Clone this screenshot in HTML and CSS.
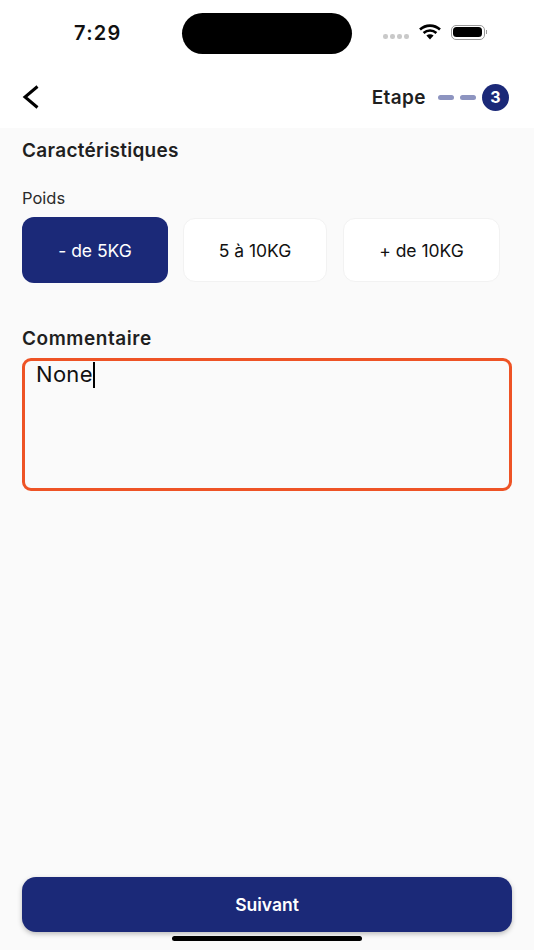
FILE: index.html
```html
<!DOCTYPE html>
<html>
<head>
  <meta charset="utf-8">
  <title>Caractéristiques</title>
  <link rel="stylesheet" href="styles.css">
</head>
<body>
  <div class="screen">
    <header class="top">
      <div class="status">
        <span class="time">7:29</span>
        <div class="island"></div>
        <div class="status-icons">
          <div class="signal"><i></i><i></i><i></i><i></i></div>
          <svg class="wifi" width="22" height="16" viewBox="0 0 22 16">
            <path d="M1 5.5C6.7 0.3 15.3 0.3 21 5.5" fill="none" stroke="#000" stroke-width="2.6"/>
            <path d="M4.6 9C8.3 5.7 13.7 5.7 17.4 9" fill="none" stroke="#000" stroke-width="2.6"/>
            <path d="M7.4 11.6L11 15.5L14.6 11.6C12.5 9.9 9.5 9.9 7.4 11.6Z" fill="#000"/>
          </svg>
          <div class="battery"><div class="battery-fill"></div></div>
          <div class="battery-tip"></div>
        </div>
      </div>
      <nav class="nav">
        <svg class="back" width="18" height="24" viewBox="0 0 18 24">
          <path d="M15.5 1.5L3 12L15.5 22.5" fill="none" stroke="#000" stroke-width="3"/>
        </svg>
        <div class="steps">
          <span class="steps-label">Etape</span>
          <i class="dash"></i>
          <i class="dash"></i>
          <span class="step-current">3</span>
        </div>
      </nav>
    </header>

    <main class="content">
      <h2 class="title">Caractéristiques</h2>
      <div class="field-label">Poids</div>
      <div class="chips">
        <div class="chip chip-active">- de 5KG</div>
        <div class="chip chip-mid">5 à 10KG</div>
        <div class="chip chip-last">+ de 10KG</div>
      </div>
      <h2 class="title title-comment">Commentaire</h2>
      <div class="comment">None<span class="caret"></span></div>
    </main>

    <footer class="bottom">
      <button class="next">Suivant</button>
      <div class="home-bar"></div>
    </footer>
  </div>
</body>
</html>
```

FILE: styles.css
```css
* {
  box-sizing: border-box;
}

body {
  margin: 0;
  font-family: Inter, "Liberation Sans", sans-serif;
  color: #1f1f1f;
}

.screen {
  width: 534px;
  height: 950px;
  display: flex;
  flex-direction: column;
  background-color: #fafafa;
}

.top {
  height: 128px;
  background-color: #fff;
}

.status {
  height: 64px;
  display: flex;
  align-items: flex-start;
  padding: 13px 0 0 74px;
}

.time {
  width: 108px;
  margin-top: 8px;
  font-size: 20px;
  font-weight: 600;
  letter-spacing: 1.3px;
  color: #111;
}

.island {
  width: 170px;
  height: 41px;
  background-color: #000;
  border-radius: 21px;
}

.status-icons {
  display: flex;
  align-items: center;
  margin: 11px 0 0 31px;
}

.signal {
  display: flex;
  gap: 2.5px;
  margin: 9px 10px 0 0;
}

.signal i {
  width: 4.5px;
  height: 4.5px;
  border-radius: 50%;
  background-color: #c9c9c9;
}

.wifi {
  margin-right: 10px;
}

.battery {
  width: 34px;
  height: 15px;
  padding: 1.5px;
  border: 1px solid #999;
  border-radius: 5px;
}

.battery-fill {
  height: 100%;
  background-color: #000;
  border-radius: 3.5px;
}

.battery-tip {
  width: 1.5px;
  height: 4px;
  margin-left: 1px;
  background-color: #999;
}

.nav {
  height: 64px;
  display: flex;
  align-items: center;
  justify-content: space-between;
  padding: 2px 25px 0 22px;
}

.steps {
  display: flex;
  align-items: center;
  gap: 6px;
}

.steps-label {
  margin-right: 6px;
  font-size: 19px;
  font-weight: 600;
  letter-spacing: 0.4px;
}

.dash {
  width: 16px;
  height: 5px;
  background-color: #8d94c0;
  border-radius: 3px;
}

.step-current {
  width: 27px;
  height: 27px;
  display: flex;
  align-items: center;
  justify-content: center;
  background-color: #1b2978;
  color: #fff;
  font-size: 16px;
  font-weight: 700;
  border-radius: 50%;
}

.content {
  flex: 1;
  padding: 11px 22px 0;
}

.title {
  margin: 0;
  font-size: 19px;
  line-height: 24px;
  font-weight: 600;
  letter-spacing: 0.3px;
}

.field-label {
  margin-top: 24px;
  font-size: 16.5px;
  line-height: 22px;
  color: #2b2b2b;
}

.chips {
  display: flex;
  align-items: center;
  margin-top: 8px;
}

.chip {
  height: 64px;
  display: flex;
  align-items: center;
  justify-content: center;
  background-color: #fff;
  border: 1px solid #f2f2f2;
  border-radius: 12px;
  font-size: 17.5px;
  color: #111;
}

.chip-active {
  width: 146px;
  height: 66px;
  background-color: #1b2978;
  border: none;
  color: #fff;
}

.chip-mid {
  width: 144px;
  margin-left: 15px;
}

.chip-last {
  width: 157px;
  margin-left: 16px;
}

.title-comment {
  margin-top: 44px;
  letter-spacing: 0.55px;
}

.comment {
  height: 133px;
  margin-top: 7px;
  padding: 0 11px;
  border: 3px solid #ee5325;
  border-radius: 9px;
  font-size: 22px;
  line-height: 26px;
  letter-spacing: 0.3px;
  color: #111;
}

.caret {
  display: inline-block;
  width: 2.5px;
  height: 26px;
  vertical-align: -6px;
  background-color: #000;
}

.bottom {
  height: 73px;
  padding: 0 22px;
  display: flex;
  flex-direction: column;
  align-items: center;
}

.next {
  width: 100%;
  height: 55px;
  flex-shrink: 0;
  background-color: #1b2978;
  color: #fff;
  border: none;
  border-radius: 14px;
  font-family: inherit;
  font-size: 17.5px;
  font-weight: 600;
  box-shadow: 0 2px 5px rgba(0, 0, 0, 0.25);
}

.home-bar {
  width: 190px;
  height: 5px;
  margin-top: 4px;
  background-color: #000;
  border-radius: 3px;
}
```
